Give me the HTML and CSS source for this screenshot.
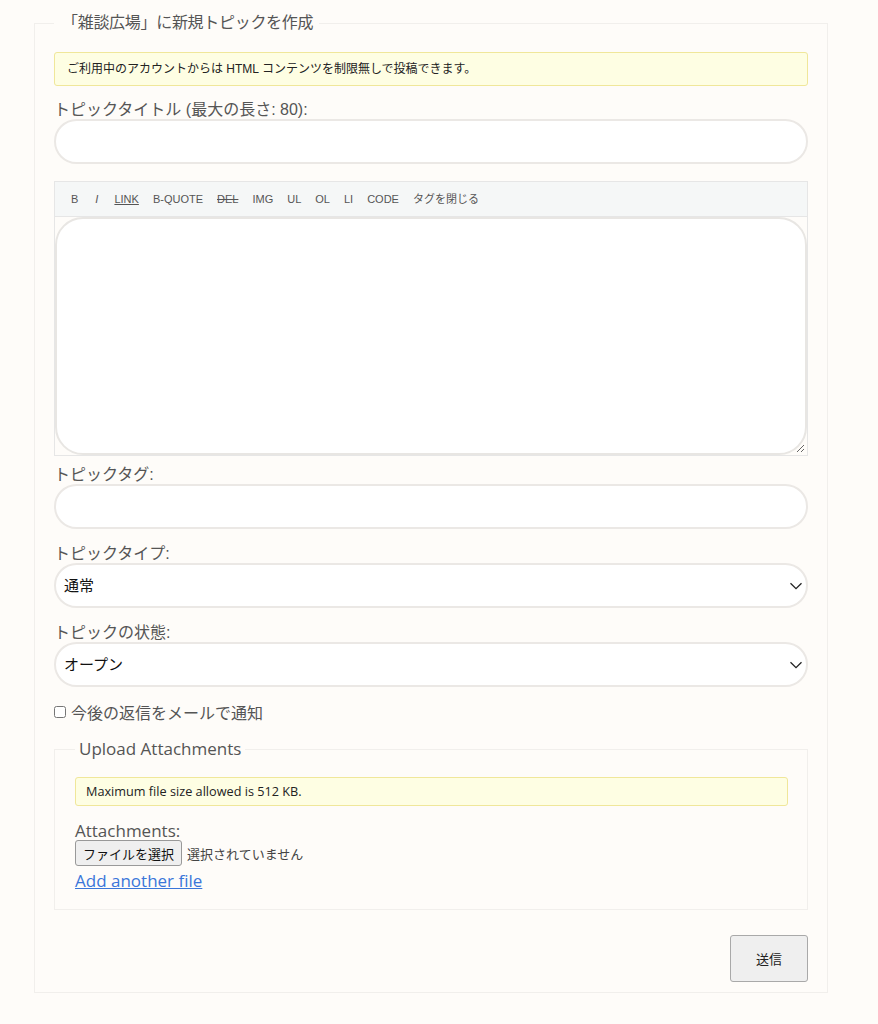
FILE: index.html
```html
<!DOCTYPE html>
<html lang="ja">
<head>
<meta charset="utf-8">
<title>新規トピックを作成</title>
<link rel="stylesheet" href="styles.css">
</head>
<body>
<form class="topic-form">
  <fieldset class="outer">
    <legend class="outer-legend">「雑談広場」に新規トピックを作成</legend>
    <div class="notice notice-main">ご利用中のアカウントからは HTML コンテンツを制限無しで投稿できます。</div>

    <label class="field-label label-title">トピックタイトル (最大の長さ: 80):</label>
    <input class="pill-input" type="text">

    <div class="editor">
      <div class="toolbar">
        <span class="tb tb-b">B</span>
        <span class="tb tb-i">I</span>
        <span class="tb tb-link">LINK</span>
        <span class="tb">B-QUOTE</span>
        <span class="tb tb-del">DEL</span>
        <span class="tb">IMG</span>
        <span class="tb">UL</span>
        <span class="tb">OL</span>
        <span class="tb">LI</span>
        <span class="tb">CODE</span>
        <span class="tb">タグを閉じる</span>
      </div>
      <textarea class="editor-area"></textarea>
    </div>

    <label class="field-label label-tag">トピックタグ:</label>
    <input class="pill-input" type="text">

    <label class="field-label label-gap">トピックタイプ:</label>
    <div class="select-wrap">
      <select class="pill-select"><option>通常</option></select>
      <svg class="chev" width="14" height="8" viewBox="0 0 14 8"><path d="M1.5 1.2 L7 6.6 L12.5 1.2" fill="none" stroke="#222" stroke-width="1.3"/></svg>
    </div>

    <label class="field-label label-gap">トピックの状態:</label>
    <div class="select-wrap">
      <select class="pill-select"><option>オープン</option></select>
      <svg class="chev" width="14" height="8" viewBox="0 0 14 8"><path d="M1.5 1.2 L7 6.6 L12.5 1.2" fill="none" stroke="#222" stroke-width="1.3"/></svg>
    </div>

    <label class="check-row"><input class="check" type="checkbox"><span>今後の返信をメールで通知</span></label>

    <fieldset class="inner">
      <legend class="inner-legend">Upload Attachments</legend>
      <div class="notice notice-upload">Maximum file size allowed is 512 KB.</div>
      <div class="attach-label">Attachments:</div>
      <div class="file-row">
        <button type="button" class="file-btn">ファイルを選択</button>
        <span class="file-none">選択されていません</span>
      </div>
      <a class="add-link" href="#">Add another file</a>
    </fieldset>

    <div class="submit-row">
      <button type="button" class="submit-btn">送信</button>
    </div>
  </fieldset>
</form>
</body>
</html>
```

FILE: styles.css
```css
html, body {
  margin: 0;
  padding: 0;
  background: #fefcf9;
}
body {
  font-family: "Liberation Sans", "Noto Sans CJK JP", sans-serif;
  color: #555;
}
.topic-form {
  margin: 0;
}
.outer {
  box-sizing: border-box;
  width: 794px;
  margin: 13px 0 0 34px;
  padding: 19px 19px 10px 19px;
  border: 1px solid #f1efec;
  min-width: 0;
}
.outer-legend {
  font-size: 16px;
  line-height: 20px;
  padding: 0 6px 0 8px;
  letter-spacing: -0.3px;
  color: #555;
}
.notice {
  box-sizing: border-box;
  background: #fefee3;
  border: 1px solid #f0e79a;
  border-radius: 3px;
  color: #222;
  font-size: 12px;
}
.notice-main {
  height: 34px;
  line-height: 16px;
  padding: 8px 12px;
}
.field-label {
  display: block;
  font-size: 16px;
  line-height: 19px;
  color: #555;
}
.label-title {
  margin-top: 14px;
}
.label-tag {
  margin-top: 9px;
}
.label-gap {
  margin-top: 15px;
}
.pill-input {
  display: block;
  box-sizing: border-box;
  width: 100%;
  height: 45px;
  margin: 0;
  border: 2px solid #ebe8e5;
  border-radius: 23px;
  background: #fff;
  outline: none;
}
.editor {
  margin-top: 17px;
  border: 1px solid #e6e6e6;
  display: flex;
  flex-direction: column;
}
.toolbar {
  height: 35px;
  box-sizing: border-box;
  background: #f5f7f7;
  border-bottom: 1px solid #e6e6e6;
  display: flex;
  align-items: center;
  padding-left: 10px;
  font-size: 11px;
  color: #555;
}
.tb {
  padding: 0 7px;
  line-height: 14px;
}
.tb-b {
  padding-left: 6px;
  padding-right: 8px;
}
.tb-i {
  font-style: italic;
  padding: 0 9px;
}
.tb-link {
  text-decoration: underline;
}
.tb-del {
  text-decoration: line-through;
}
.editor-area {
  display: block;
  box-sizing: border-box;
  width: 100%;
  height: 238px;
  margin: 0;
  border: 2px solid #e8e6e3;
  border-radius: 28px;
  background: #fff;
  outline: none;
  resize: vertical;
}
.select-wrap {
  position: relative;
}
.pill-select {
  display: block;
  box-sizing: border-box;
  width: 100%;
  height: 45px;
  margin: 0;
  padding: 0 0 0 8px;
  border: 2px solid #ebe8e5;
  border-radius: 23px;
  background: #fff;
  appearance: none;
  -webkit-appearance: none;
  font-family: "Liberation Sans", "Noto Sans CJK JP", sans-serif;
  font-size: 15px;
  color: #111;
  outline: none;
}
.chev {
  position: absolute;
  right: 5px;
  top: 19px;
  pointer-events: none;
}
.check-row {
  display: flex;
  align-items: center;
  margin-top: 15px;
  height: 20px;
  font-size: 16px;
  color: #555;
}
.check {
  margin: 0 5px 0 0;
  width: 12px;
  height: 12px;
}
.inner {
  margin: 17px 0 0 0;
  padding: 18px 19px 18px 20px;
  border: 1px solid #f1efec;
  min-width: 0;
}
.inner-legend {
  font-family: "Open Sans", "Noto Sans CJK JP", sans-serif;
  font-size: 17px;
  line-height: 20px;
  padding: 0 4px;
  color: #555;
}
.notice-upload {
  height: 29px;
  line-height: 15px;
  padding: 6px 10px;
  font-family: "Open Sans", "Noto Sans CJK JP", sans-serif;
  font-size: 12.7px;
}
.attach-label {
  margin-top: 15px;
  font-family: "Open Sans", "Noto Sans CJK JP", sans-serif;
  font-size: 17px;
  line-height: 19px;
  color: #555;
}
.file-row {
  display: flex;
  align-items: center;
  height: 26px;
}
.file-btn {
  box-sizing: border-box;
  height: 26px;
  padding: 0 7px;
  margin: 0 5px 0 0;
  background: #efefef;
  border: 1px solid #999;
  border-radius: 3px;
  font-family: "Liberation Sans", "Noto Sans CJK JP", sans-serif;
  font-size: 13px;
  color: #111;
}
.file-none {
  font-size: 13px;
  color: #444;
}
.add-link {
  display: block;
  margin-top: 5px;
  font-family: "Open Sans", "Noto Sans CJK JP", sans-serif;
  font-size: 17px;
  line-height: 20px;
  color: #3a76d9;
  text-decoration: underline;
  width: max-content;
}
.submit-row {
  display: flex;
  justify-content: flex-end;
  margin-top: 25px;
}
.submit-btn {
  box-sizing: border-box;
  width: 78px;
  height: 47px;
  background: #efefef;
  border: 1px solid #a9a9a9;
  border-radius: 3px;
  font-family: "Liberation Sans", "Noto Sans CJK JP", sans-serif;
  font-size: 13px;
  color: #222;
}
```
